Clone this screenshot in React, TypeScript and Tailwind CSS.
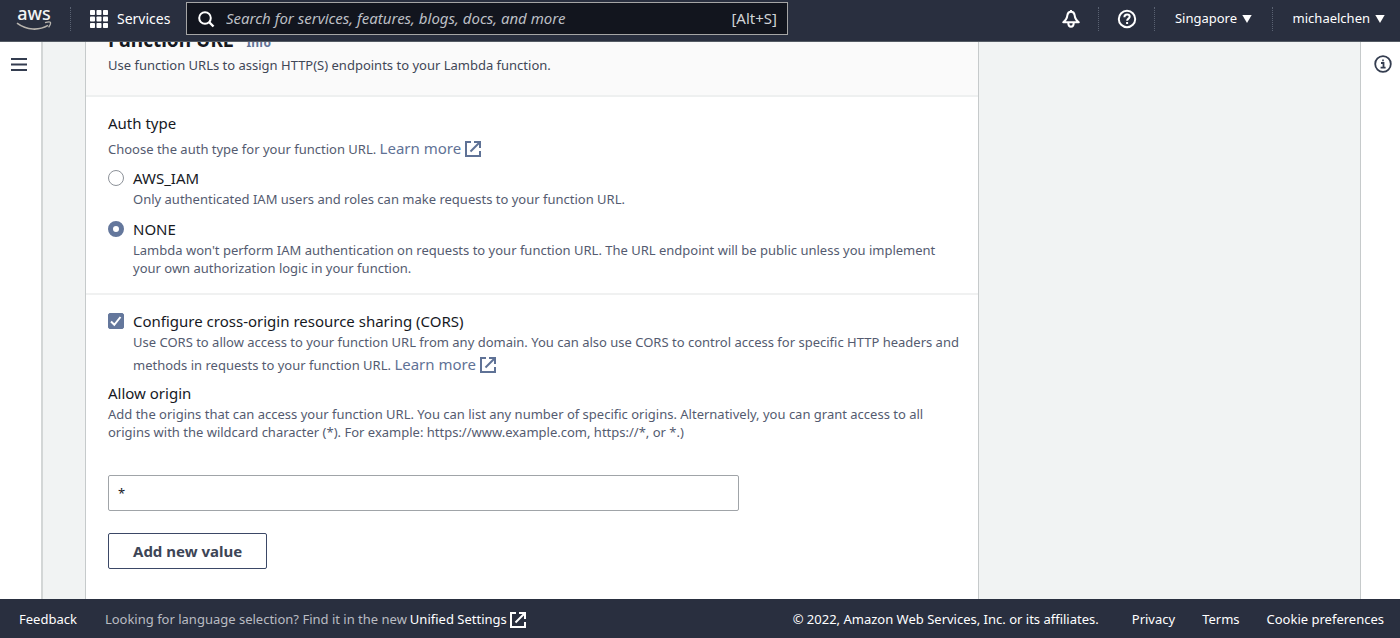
import type { ReactNode } from "react";

function ExternalIcon({ className = "" }: { className?: string }) {
  return (
    <svg viewBox="0 0 16 16" className={`inline-block h-4 w-4 shrink-0 ${className}`} fill="none" stroke="currentColor" strokeWidth="2" aria-hidden="true">
      <path d="M6 1H1v14h14v-5" />
      <path d="M9 1h6v6" />
      <path d="M15 1 5.5 10.5" />
    </svg>
  );
}

function Caret() {
  return (
    <svg viewBox="0 0 10 8" className="h-2 w-[10px]" fill="currentColor" aria-hidden="true">
      <path d="M.3 0h9.4L5 8z" />
    </svg>
  );
}

function AwsLogo() {
  return (
    <a href="#home" aria-label="AWS" className="flex w-[34px] flex-col items-center text-[#f2f3f3]">
      <span className="h-[15px] text-[18px] leading-[15px] font-medium">aws</span>
      <svg viewBox="0 0 36 10" className="h-[10px] w-9 shrink-0" fill="none" stroke="#b8b4ae" strokeWidth="1.6" aria-hidden="true">
        <path d="M1 2.2C11 9.6 23 9.7 32 4.4" />
        <path d="M29 1.6c2.2-.6 5-.9 5.4-.2.4.8-.4 3-1.8 4.9" strokeWidth="1.3" />
      </svg>
    </a>
  );
}

function Divider() {
  return <span className="h-6 w-px border-l border-dotted border-[#5a6272]" />;
}

function Header() {
  return (
    <header className="flex h-[42px] shrink-0 items-center border-b border-[#545b64] bg-[#292f3f] pb-1 text-white">
      <div className="flex flex-1 items-center">
        <div className="flex w-[70px] justify-center pr-[2px]">
          <AwsLogo />
        </div>
        <Divider />
        <button type="button" className="flex w-[115px] items-center gap-[9px] pl-[19px] text-sm font-[450]">
          <svg viewBox="0 0 18 18" className="h-[18px] w-[18px]" fill="currentColor" aria-hidden="true">
            {[0, 6.5, 13].map((y) => [0, 6.5, 13].map((x) => <rect key={`${x}-${y}`} x={x} y={y} width="5" height="5" rx=".8" />))}
          </svg>
          Services
        </button>
        <label className="flex h-[33px] w-full max-w-[602px] items-center gap-[11px] border border-[#a5a5a5] bg-[#12151e] px-[10px]">
          <svg viewBox="0 0 18 18" className="h-[18px] w-[18px] shrink-0" fill="none" stroke="currentColor" strokeWidth="2" aria-hidden="true">
            <circle cx="8" cy="8" r="5.8" />
            <path d="m12 12 4.5 4.5" strokeWidth="2.4" />
          </svg>
          <input
            type="search"
            aria-label="Search"
            placeholder="Search for services, features, blogs, docs, and more"
            className="min-w-0 flex-1 bg-transparent text-[15px] italic outline-none placeholder:text-[#bcbfc4]"
          />
          <span className="text-[15px] text-[#d0d3d6]">[Alt+S]</span>
        </label>
      </div>
      <nav className="flex items-center">
        <button type="button" aria-label="Notifications" className="flex w-[54px] justify-center">
          <svg viewBox="0 0 20 20" className="h-5 w-5" fill="none" stroke="currentColor" strokeWidth="2" strokeLinejoin="round" aria-hidden="true">
            <path d="M10 2.800C7.800 2.800 6.600 4.400 6.400 6.200 6.100 9.200 4.800 11.400 2.200 13.200h15.600C15.200 11.400 13.900 9.200 13.600 6.200 13.400 4.400 12.200 2.800 10 2.800z" />
            <path d="M10 1v2" />
            <path d="M7.300 14c0 2.200 1 3.700 2.700 3.700s2.700-1.500 2.700-3.700" />
          </svg>
        </button>
        <Divider />
        <button type="button" aria-label="Help" className="flex w-[55px] justify-center">
          <svg viewBox="0 0 20 20" className="h-5 w-5" fill="none" stroke="currentColor" strokeWidth="2" aria-hidden="true">
            <circle cx="10" cy="10" r="8.200" />
            <path d="M7.400 8.200c0-1.700 1.100-2.600 2.700-2.600 1.500 0 2.600.8 2.600 2.200 0 1.800-2.600 1.900-2.600 4" />
            <path d="M10.100 13v2" />
          </svg>
        </button>
        <Divider />
        <button type="button" className="flex w-[117px] items-center justify-center gap-[5px] text-[13px] font-[450]">
          Singapore <Caret />
        </button>
        <Divider />
        <button type="button" className="flex w-[127px] items-center justify-end gap-[5px] pr-[15px] text-[13px] font-[450]">
          michaelchen <Caret />
        </button>
      </nav>
    </header>
  );
}

function LearnMore() {
  return (
    <a href="#learn" className="text-[15px] text-[#5f7296]">
      Learn more <ExternalIcon className="-mt-px" />
    </a>
  );
}

function AuthOption({ id, label, checked, children }: { id: string; label: string; checked?: boolean; children: ReactNode }) {
  return (
    <div className="flex gap-[9px]">
      <input
        type="radio"
        name="auth"
        id={id}
        defaultChecked={checked}
        className="mt-[2px] h-4 w-4 shrink-0 appearance-none rounded-full border border-[#8d9299] bg-white checked:border-[5px] checked:border-[#64779c]"
      />
      <div>
        <label htmlFor={id} className="block text-[15px] leading-5 text-[#16191f]">{label}</label>
        <p className="mt-[2px] text-[13px] leading-[18px] text-[#545b70]">{children}</p>
      </div>
    </div>
  );
}

function FunctionUrlPanel() {
  return (
    <section className="w-full max-w-[894px] border-x border-[#c6cacb] bg-white">
      <div className="-mt-[14px] border-b-2 border-[#eef0f0] bg-[#fafafa] px-[22px] pb-[21px]">
        <h2 className="flex items-baseline gap-[13px] text-[19px] leading-6 font-bold text-[#16191f]">
          Function URL
          <a href="#info" className="text-[12px] text-[#5f7296]">Info</a>
        </h2>
        <p className="mt-px text-[13px] leading-[18px] text-[#3f4757]">Use function URLs to assign HTTP(S) endpoints to your Lambda function.</p>
      </div>
      <div className="border-b-2 border-[#f0f1f1] px-[22px] pt-4 pb-4">
        <h3 className="text-[15px] leading-5 text-[#16191f]">Auth type</h3>
        <p className="mt-1 text-[13px] leading-[22px] text-[#545b70]">
          Choose the auth type for your function URL. <LearnMore />
        </p>
        <div className="mt-2 flex flex-col gap-[11px]">
          <AuthOption id="iam" label="AWS_IAM">Only authenticated IAM users and roles can make requests to your function URL.</AuthOption>
          <AuthOption id="none" label="NONE" checked>
            Lambda won't perform IAM authentication on requests to your function URL. The URL endpoint will be public unless you implement your own authorization logic in your function.
          </AuthOption>
        </div>
      </div>
      <div className="px-[22px] pt-4">
        <div className="-mr-3 flex gap-[9px]">
          <span className="relative mt-[2px] h-4 w-4 shrink-0">
            <input type="checkbox" id="cors" defaultChecked className="peer block h-4 w-4 appearance-none rounded-[2px] border border-[#8d9299] checked:border-[#64779c] checked:bg-[#64779c]" />
            <svg viewBox="0 0 16 16" className="pointer-events-none absolute inset-0 hidden h-4 w-4 peer-checked:block" fill="none" stroke="white" strokeWidth="2" aria-hidden="true">
              <path d="m3 8.500 3.300 3.300L12.500 4" />
            </svg>
          </span>
          <div>
            <label htmlFor="cors" className="block text-[15px] leading-5 text-[#16191f]">Configure cross-origin resource sharing (CORS)</label>
            <p className="text-[13px] leading-[22px] text-[#545b70]">
              Use CORS to allow access to your function URL from any domain. You can also use CORS to control access for specific HTTP headers and methods in requests to your function URL. <LearnMore />
            </p>
          </div>
        </div>
        <label htmlFor="origin" className="mt-[7px] block text-[15px] leading-5 text-[#16191f]">Allow origin</label>
        <p className="mt-[2px] text-[13px] leading-[18px] text-[#545b70]">
          Add the origins that can access your function URL. You can list any number of specific origins. Alternatively, you can grant access to all origins with the wildcard character (*). For example: https://www.example.com, https://*, or *.)
        </p>
        <input id="origin" defaultValue="*" className="mt-[34px] block h-9 w-full max-w-[631px] rounded-[2px] border border-[#a0a4a8] px-[9px] text-[13px] text-[#16191f]" />
        <button type="button" className="mt-[22px] h-9 rounded-[2px] border border-[#3b4866] px-6 text-[15px] font-bold text-[#3d4556]">
          Add new value
        </button>
      </div>
    </section>
  );
}

function Footer() {
  return (
    <footer className="flex h-[39px] shrink-0 items-center justify-between bg-[#292f3f] pt-[3px] pr-4 pl-[19px] text-[13px] font-[450] whitespace-nowrap text-white">
      <div className="flex items-center gap-7">
        <a href="#feedback">Feedback</a>
        <p className="flex items-center gap-[3px] font-normal text-[#b9bcc2]">
          Looking for language selection? Find it in the new
          <a href="#settings" className="flex items-center gap-[3px] font-[450] text-white">
            Unified Settings <ExternalIcon />
          </a>
        </p>
      </div>
      <div className="flex items-center">
        <span className="mr-[33px]">© 2022, Amazon Web Services, Inc. or its affiliates.</span>
        <nav className="flex gap-[27px]">
          <a href="#privacy">Privacy</a>
          <a href="#terms">Terms</a>
          <a href="#cookies">Cookie preferences</a>
        </nav>
      </div>
    </footer>
  );
}

export default function App() {
  return (
    <div className="flex h-screen flex-col overflow-hidden bg-white font-['Noto_Sans',sans-serif]">
      <Header />
      <div className="flex min-h-0 flex-1">
        <aside className="w-[43px] shrink-0 border-r-2 border-[#d3d6d6] pt-[15px] pl-[11px]">
          <button type="button" aria-label="Open navigation" className="block text-[#343d50]">
            <svg viewBox="0 0 16 15" className="h-[15px] w-4" stroke="currentColor" strokeWidth="2" aria-hidden="true">
              <path d="M0 2h16M0 7.500h16M0 13h16" />
            </svg>
          </button>
        </aside>
        <main className="flex min-w-0 flex-1 items-stretch overflow-hidden bg-[#f1f3f3] pl-[42px]">
          <FunctionUrlPanel />
        </main>
        <aside className="w-10 shrink-0 border-l border-[#c6cacb] pt-[13px] pl-[13px]">
          <button type="button" aria-label="Open info panel" className="block text-[#343d50]">
            <svg viewBox="0 0 18 18" className="h-[18px] w-[18px]" fill="none" stroke="currentColor" strokeWidth="1.800" aria-hidden="true">
              <circle cx="9" cy="9" r="7.800" />
              <path d="M7 8h2.500v4.500M6.600 12.600h5M8.200 5.400h1.600" />
            </svg>
          </button>
        </aside>
      </div>
      <Footer />
    </div>
  );
}
